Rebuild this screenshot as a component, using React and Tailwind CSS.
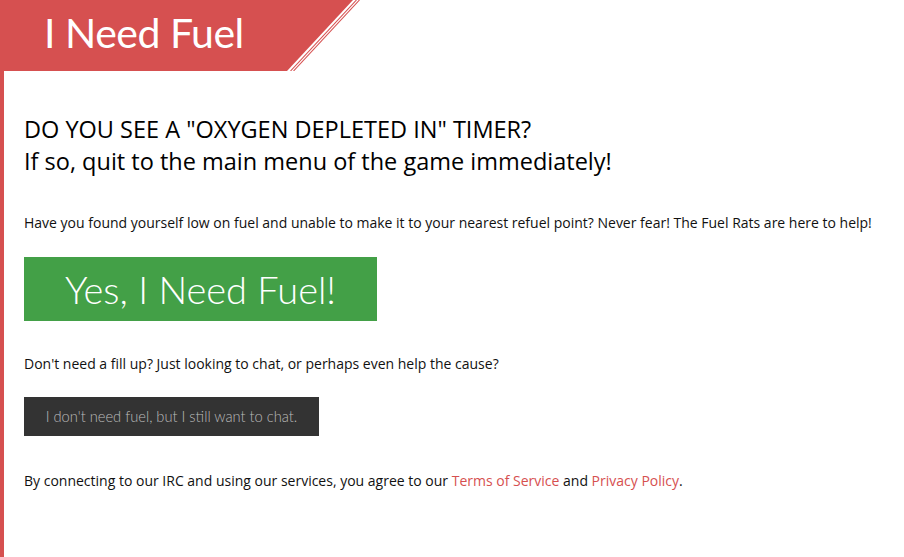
import React from 'react';

const red = '#d65050';

const Header = () => (
    <header className="relative h-[71px]">
        {/* bandeau rouge en biais */}
        <svg className="absolute left-0 top-0" width="380" height="71" viewBox="0 0 380 71">
            <polygon points="0,0 353,0 287,71 0,71" fill={red} />
            <line x1="356.5" y1="0" x2="290.5" y2="71" stroke={red} strokeWidth="1.1" />
            <line x1="359.5" y1="0" x2="293.5" y2="71" stroke={red} strokeWidth="1.1" />
        </svg>
        <h1 className="relative pl-[44px] pt-[10px] text-[41px] leading-[46px] text-white font-['Lato',sans-serif] font-normal tracking-[-0.5px]">
            I Need Fuel
        </h1>
    </header>
);

export default function App() {
    return (
        <div className="min-h-screen bg-white font-['Open_Sans',sans-serif] text-[#111]">
            <Header />
            <main className="min-h-[486px] border-l-4 border-[#d65050] pl-5 pt-[42px] pb-10">
                <h2 className="text-[23.5px] leading-[32px] font-normal text-black">
                    DO YOU SEE A "OXYGEN DEPLETED IN" TIMER?
                    <br />
                    If so, quit to the main menu of the game immediately!
                </h2>

                <p className="mt-[36px] text-[14px] leading-5">
                    Have you found yourself low on fuel and unable to make it to your nearest refuel point? Never fear! The Fuel Rats are here to help!
                </p>

                <button className="mt-[24px] flex h-16 w-[353px] items-center justify-center bg-[#43a047] text-[38px] text-white font-['Lato',sans-serif] font-light">
                    Yes, I Need Fuel!
                </button>

                <p className="mt-[33px] text-[14px] leading-5">
                    Don't need a fill up? Just looking to chat, or perhaps even help the cause?
                </p>

                <button className="mt-[23px] flex h-[39px] w-[295px] items-center justify-center bg-[#333333] text-[14.7px] text-[#bababa] font-['Lato',sans-serif] font-light">
                    I don't need fuel, but I still want to chat.
                </button>

                <p className="mt-[35px] text-[14px] leading-5">
                    By connecting to our IRC and using our services, you agree to our{' '}
                    <a href="#" className="text-[#d65050]">Terms of Service</a> and{' '}
                    <a href="#" className="text-[#d65050]">Privacy Policy</a>.
                </p>
            </main>
        </div>
    );
}
